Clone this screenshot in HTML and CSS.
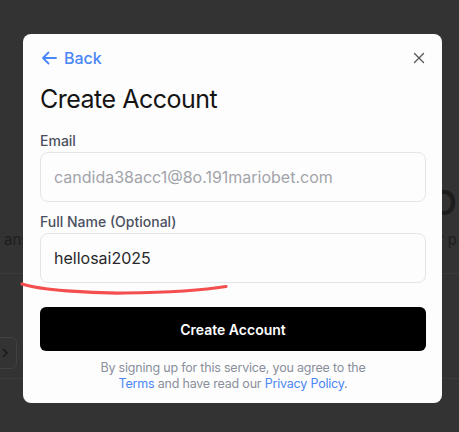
FILE: index.html
```html
<!DOCTYPE html>
<html lang="en">
<head>
<meta charset="utf-8">
<title>Create Account</title>
<link rel="stylesheet" href="styles.css">
</head>
<body>
<div class="page">
  <section class="hero">
    <div class="hero-title"><span class="big">O</span></div>
    <div class="hero-row"><span>ans</span><span>r p</span></div>
  </section>
  <section class="toolbar">
    <div class="nav-btn">
      <svg width="8" height="12" viewBox="0 0 8 12"><path d="M2 2l4 4-4 4" fill="none" stroke="#1a1a1a" stroke-width="1.6"/></svg>
    </div>
  </section>
</div>

<div class="modal">
  <div class="modal-top">
    <a class="back" href="#">
      <svg width="16" height="14" viewBox="0 0 16 14"><path d="M15 7H2M7.5 1.5L2 7l5.5 5.5" fill="none" stroke="#4a86f7" stroke-width="1.8" stroke-linecap="round" stroke-linejoin="round"/></svg>
      <span>Back</span>
    </a>
    <button class="close" aria-label="Close">
      <svg width="12" height="12" viewBox="0 0 12 12"><path d="M1.5 1.5l9 9M10.5 1.5l-9 9" stroke="#5a5a5a" stroke-width="1.4" stroke-linecap="round"/></svg>
    </button>
  </div>
  <h1 class="title">Create Account</h1>
  <label class="label">Email</label>
  <div class="field disabled">candida38acc1@8o.191mariobet.com</div>
  <label class="label second">Full Name (Optional)</label>
  <div class="field">hellosai2025</div>
  <button class="submit">Create Account</button>
  <p class="legal">By signing up for this service, you agree to the<br><a href="#">Terms</a> and have read our <a href="#">Privacy Policy</a>.</p>
</div>

<svg class="scribble" width="459" height="432" viewBox="0 0 459 432">
  <path d="M22 284 C 40 290, 90 293.5, 125 293 C 165 292.5, 205 290, 226 286.5" fill="none" stroke="#f34f4f" stroke-width="3.2" stroke-linecap="round"/>
</svg>
</body>
</html>
```

FILE: styles.css
```css
* { box-sizing: border-box; }
html, body { margin: 0; padding: 0; }
body {
  width: 459px;
  height: 432px;
  overflow: hidden;
  background: #333333;
  font-family: Inter, "Noto Sans", sans-serif;
  position: relative;
}
.page { display: flex; flex-direction: column; }
.hero {
  height: 274px;
  border-bottom: 1px solid #3b3b3b;
  padding-top: 186px;
  color: #1d1d1d;
}
.hero-title { display: flex; justify-content: flex-end; height: 34px; }
.big { font-size: 34px; font-weight: 600; line-height: 34px; margin-right: 2px; }
.hero-row {
  display: flex;
  justify-content: space-between;
  padding: 0 2px 0 4px;
  font-size: 15px;
  line-height: 20px;
  margin-top: 10px;
}
.toolbar {
  height: 105px;
  border-bottom: 1px solid #3b3b3b;
  padding-top: 63px;
}
.nav-btn {
  width: 26px;
  height: 32px;
  margin-left: -9px;
  border: 1px solid #414141;
  border-radius: 6px;
  display: flex;
  align-items: center;
  justify-content: flex-end;
  padding-right: 7px;
}
.modal {
  position: absolute;
  left: 23px;
  top: 34px;
  width: 419px;
  height: 369px;
  background: #fdfdfd;
  border-radius: 8px;
  padding: 12px 16px 0 17px;
  display: flex;
  flex-direction: column;
}
.modal-top {
  display: flex;
  justify-content: space-between;
  align-items: center;
  height: 24px;
}
.back {
  display: flex;
  align-items: center;
  gap: 7px;
  color: #4a86f7;
  text-decoration: none;
  font-size: 16px;
  font-weight: 500;
  line-height: 24px;
  padding-left: 1px;
}
.close {
  border: 0;
  background: none;
  padding: 0;
  width: 12px;
  height: 12px;
  margin-right: 1px;
  display: flex;
}
.title {
  margin: 13px 0 0;
  font-size: 25px;
  font-weight: 400;
  line-height: 32px;
  color: #141414;
  letter-spacing: -0.5px;
}
.label {
  display: block;
  margin-top: 16px;
  font-size: 14px;
  line-height: 20px;
  font-weight: 500;
  color: #4b5060;
}
.label.second { margin-top: 10px; }
.field {
  margin-top: 1px;
  height: 50px;
  border: 1px solid #e4e5e9;
  border-radius: 8px;
  padding: 0 13px;
  display: flex;
  align-items: center;
  font-size: 16px;
  color: #27272a;
  background: #fdfdfd;
}
.field.disabled { color: #a2a4aa; }
.submit {
  margin-top: 24px;
  height: 44px;
  border: 0;
  border-radius: 6px;
  background: #000;
  color: #fff;
  font-family: inherit;
  font-size: 14px;
  font-weight: 600;
}
.legal {
  margin: 9px 0 0;
  text-align: center;
  font-size: 12.5px;
  line-height: 16px;
  color: #8a8f9c;
  letter-spacing: -0.2px;
}
.legal a { color: #4a86f7; text-decoration: none; }
.scribble { position: absolute; left: 0; top: 0; pointer-events: none; }
```
